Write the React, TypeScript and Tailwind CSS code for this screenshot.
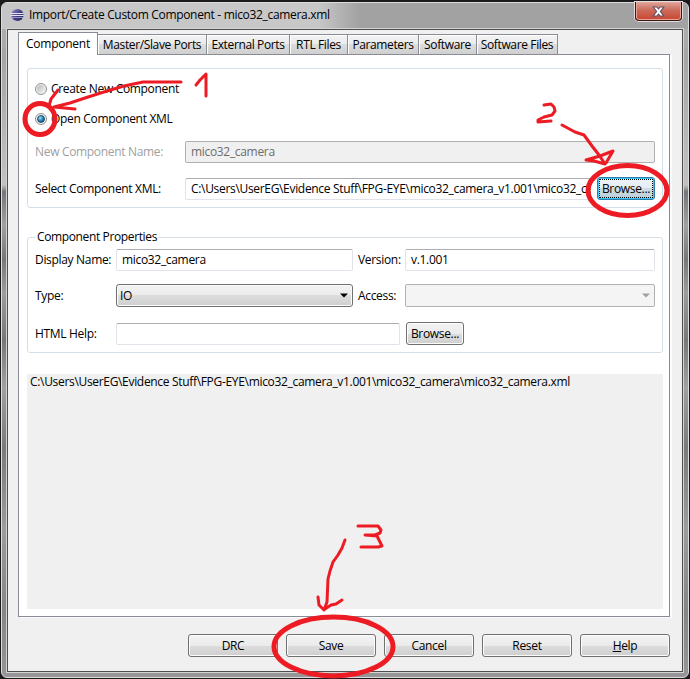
import type { ReactNode } from 'react';
import clsx from 'clsx';

const TABS = [
    { label: 'Master/Slave Ports', width: 'w-[109px]' },
    { label: 'External Ports', width: 'w-[83px]' },
    { label: 'RTL Files', width: 'w-[58px]' },
    { label: 'Parameters', width: 'w-[71px]' },
    { label: 'Software', width: 'w-[58px]' },
    { label: 'Software Files', width: 'w-[81px]' },
];

const EclipseIcon = () => (
    <svg width="14" height="14" viewBox="0 0 14 14">
        <defs>
            <linearGradient id="ball" x1="0" y1="0" x2="1" y2="1">
                <stop offset="0" stopColor="#8f8fc4" />
                <stop offset="0.5" stopColor="#433f86" />
                <stop offset="1" stopColor="#29265c" />
            </linearGradient>
        </defs>
        <ellipse cx="5" cy="7" rx="4.6" ry="5.6" fill="#b9a9c6" />
        <circle cx="7.6" cy="7" r="6" fill="url(#ball)" />
        <path d="M0.5 5.5H13.6M0.3 7.5H13.8" stroke="#e4e4f3" strokeWidth="1" />
        <path d="M0.8 9.5H13.2" stroke="#a9a9d6" strokeWidth="0.8" />
    </svg>
);

const CloseButton = () => (
    <button className="flex h-[19px] w-[47px] items-center justify-center rounded-b-[4px] border border-t-0 border-[#3b1512] bg-linear-to-b from-[#dba59b] via-[#cd6a5b] via-45% to-[#c9452f] shadow-[0_0_0_1px_#e3dedd,inset_0_0_0_1px_#e6a79a]">
        <svg width="13" height="11" viewBox="0 0 13 11">
            <path
                d="M1.2 1H4.8L6.5 3L8.2 1H11.8L8.4 5.5L11.8 10H8.2L6.5 8L4.8 10H1.2L4.6 5.5Z"
                fill="#fff"
                stroke="#5b5066"
                strokeWidth="1.1"
            />
        </svg>
    </button>
);

const Radio = ({ checked = false }: { checked?: boolean }) => (
    <span className="flex h-3 w-3 items-center justify-center rounded-full border border-[#8e8f8f] bg-[#f4f4f4]">
        {checked ? (
            <span className="h-2 w-2 rounded-full border border-[#1d4a68] bg-radial-[at_35%_30%] from-[#9be2fb] via-[#2b86b5] via-50% to-[#0b3553]" />
        ) : (
            <span className="h-2 w-2 rounded-full bg-linear-to-br from-[#b4b9bf] to-[#f3f3f3]" />
        )}
    </span>
);

const Button = ({
    children,
    className = 'justify-center',
    focused = false,
}: {
    children: ReactNode;
    className?: string;
    focused?: boolean;
}) => (
    <button
        className={clsx(
            'flex h-[23px] shrink-0 items-center rounded-[3px] border',
            focused
                ? 'border-[#2b7ea8] bg-[linear-gradient(#eff4f7,#e3edf2_50%,#cddde5_50%,#b9ccd6)] p-px shadow-[inset_0_0_0_1px_#3fc7f3]'
                : 'border-[#707070] bg-[linear-gradient(#f3f3f3,#ebebeb_50%,#dddddd_50%,#cfcfcf)] shadow-[inset_0_0_0_1px_#fcfcfc]',
            className
        )}
    >
        {children}
    </button>
);

const Field = ({
    children,
    className,
    disabled = false,
}: {
    children?: ReactNode;
    className?: string;
    disabled?: boolean;
}) => (
    <div
        className={clsx(
            'h-[22px] overflow-hidden rounded-[2px] border pl-[5px] leading-[20px] whitespace-nowrap',
            disabled
                ? 'border-[#afafaf] bg-[#f0f0f0] text-[#6d6d6d]'
                : 'border-[#e2e3ea] border-t-[#abadb3] bg-white',
            className
        )}
    >
        {children}
    </div>
);

const Arrow = ({ className }: { className: string }) => (
    <svg width="8" height="5" viewBox="0 0 8 5" className={className}>
        <path d="M0 0.5H8L4 4.5Z" fill="currentColor" />
    </svg>
);

// Red marker strokes that number the three steps
const Annotations = () => (
    <svg
        className="pointer-events-none absolute inset-0"
        width="690"
        height="679"
        viewBox="0 0 690 679"
        fill="none"
        stroke="#ed1c24"
        strokeWidth="3"
        strokeLinecap="round"
        strokeLinejoin="round"
    >
        <ellipse cx="40" cy="119" rx="15" ry="15.5" strokeWidth="5" />
        <path d="M181 82L143 82L124 86L107 91L88 97L70 103L54 107L75 109M58 90L51 99L49 106" />
        <path d="M196 85L200 80L206 74L206 96" />

        <path d="M544 105L551 104L554 107L555 111L552 115L544 117L538 120L538 122L551 121" />
        <path d="M562 125L575 132L584 135L592 146L599 155L605 164L594 161L586 160L600 156L613 151L606 163" />
        <ellipse cx="627.5" cy="190.500" rx="39.5" ry="25" strokeWidth="5" />

        <path d="M358 526L378 526L381 530L380 533L375 535L365 535L377 536L382 546L378 547L361 547" />
        <path d="M345 540L342 548L338 555L333 562L330 571L328 579L327 602L324 610L319 605L318 597M325 609L331 605L336 604L342 600" />
        <ellipse cx="333.500" cy="646.500" rx="59.5" ry="29.5" strokeWidth="5" />
    </svg>
);

export default function App() {
    return (
        <div className="relative h-[679px] w-[690px] overflow-hidden bg-[#1b1a1d] p-px pt-0.5 font-['Open_Sans','Noto_Sans',sans-serif] text-[12px] leading-4 tracking-[-0.32px] text-black">
            <div className="flex h-[676px] flex-col rounded-[6px] border border-[#dcdcdc] bg-[linear-gradient(#b5b5b5,#a5a5a5_8%,#c4c0c1_27%,#77757a_28%,#a0a0a0_33%,#777777_38%,#9c9c9c_43%,#777777_50%,#a0a0a0_57%,#7a7a7a_66%,#9c9c9c_78%,#858585_90%,#969696)] px-[5px] pb-[5px]">
                <header className="-mx-[5px] flex h-[26px] items-start rounded-t-[5px] bg-linear-to-r from-[#c6c6c6] from-0% via-[#c8c8c8] via-46% to-[#a2a2a2] to-52% pl-2">
                    <div className="mt-[5px]">
                        <EclipseIcon />
                    </div>
                    <h1 className="mt-1 ml-[5px] whitespace-nowrap">
                        Import/Create Custom Component - mico32_camera.xml
                    </h1>
                    <div className="-mt-px mr-[6px] ml-auto">
                        <CloseButton />
                    </div>
                </header>

                <main className="flex-1 border border-[#4d4d4d] bg-[#f0f0f0] px-[10px] pt-0.5 shadow-[0_0_0_1px_#d5d5d5]">
                    <nav className="flex h-[22px] items-end tracking-[-0.37px]">
                        <div className="relative z-10 -mb-px h-[23px] w-[80px] border border-b-0 border-[#898c95] bg-white pt-[3px] text-center tracking-[-0.25px]">
                            Component
                        </div>
                        {TABS.map((tab) => (
                            <div
                                key={tab.label}
                                className={clsx(
                                    'h-5 border border-b-0 border-l-0 border-[#898c95] bg-[linear-gradient(#f3f3f3,#ebebeb_50%,#dddddd_50%,#cfcfcf)] pt-0.5 text-center whitespace-nowrap shadow-[inset_1px_1px_0_#fff]',
                                    tab.width
                                )}
                            >
                                {tab.label}
                            </div>
                        ))}
                    </nav>

                    <section className="h-[563px] w-[652px] border border-[#898c95] bg-white px-2 pt-[13px] shadow-[2px_1px_0_#fbfbfb]">
                        <div className="h-[140px] w-[636px] rounded-[3px] border border-[#d5dfe5] pt-3 pl-[7px]">
                            <label className="flex h-4 items-center gap-1">
                                <Radio />
                                <span>Create New Component</span>
                            </label>
                            <label className="mt-[14px] flex h-4 items-center gap-1">
                                <Radio checked />
                                <span>Open Component XML</span>
                            </label>
                            <div className="mt-[14px] flex items-center">
                                <span className="w-[150px] text-[#a0a0a0]">New Component Name:</span>
                                <Field disabled className="w-[470px]">
                                    mico32_camera
                                </Field>
                            </div>
                            <div className="mt-[14px] flex items-center">
                                <span className="w-[150px]">Select Component XML:</span>
                                <Field className="w-[406px] border-r-0">
                                    C:\Users\UserEG\Evidence Stuff\FPG-EYE\mico32_camera_v1.001\mico32_camera
                                </Field>
                                <Button focused className="ml-[6px] w-[58px]">
                                    <span className="flex h-full w-full items-center justify-center border border-dotted border-black">
                                        Browse...
                                    </span>
                                </Button>
                            </div>
                        </div>

                        <fieldset className="mt-[21px] h-[124px] w-[636px] rounded-[3px] border border-[#d5dfe5] pl-[7px]">
                            <legend className="px-0.5 leading-4 tracking-[-0.37px]">
                                Component Properties
                            </legend>
                            <div className="mt-1 flex items-center">
                                <span className="w-[81px]">Display Name:</span>
                                <Field className="w-[237px]">mico32_camera</Field>
                                <span className="ml-[5px] w-[47px]">Version:</span>
                                <Field className="w-[250px]">v.1.001</Field>
                            </div>
                            <div className="mt-[13px] flex items-center">
                                <span className="w-[81px]">Type:</span>
                                <Button className="w-[237px] justify-between pr-1 pl-[3px]">
                                    IO
                                    <Arrow className="text-black" />
                                </Button>
                                <span className="ml-[5px] w-[47px]">Access:</span>
                                <div className="flex h-[23px] w-[250px] items-center justify-end rounded-[2px] border border-[#adb2b5] bg-[#f4f4f4] pr-1">
                                    <Arrow className="text-[#a0a0a0]" />
                                </div>
                            </div>
                            <div className="mt-[15px] flex items-center">
                                <span className="w-[81px]">HTML Help:</span>
                                <Field className="w-[284px]" />
                                <Button className="ml-[6px] w-[58px] justify-center">Browse...</Button>
                            </div>
                        </fieldset>

                        <div className="mt-[21px] h-[235px] w-[636px] bg-[#f0f0f0] pl-[3px] leading-4">
                            C:\Users\UserEG\Evidence Stuff\FPG-EYE\mico32_camera_v1.001\mico32_camera\mico32_camera.xml
                        </div>
                    </section>

                    <footer className="mt-[17px] flex w-[652px] justify-end gap-2">
                        <Button className="w-[90px] justify-center">DRC</Button>
                        <Button className="w-[90px] justify-center">Save</Button>
                        <Button className="w-[90px] justify-center">Cancel</Button>
                        <Button className="w-[90px] justify-center">Reset</Button>
                        <Button className="w-[90px] justify-center">
                            <span>
                                <span className="underline">H</span>elp
                            </span>
                        </Button>
                    </footer>
                </main>
            </div>
            <Annotations />
        </div>
    );
}
